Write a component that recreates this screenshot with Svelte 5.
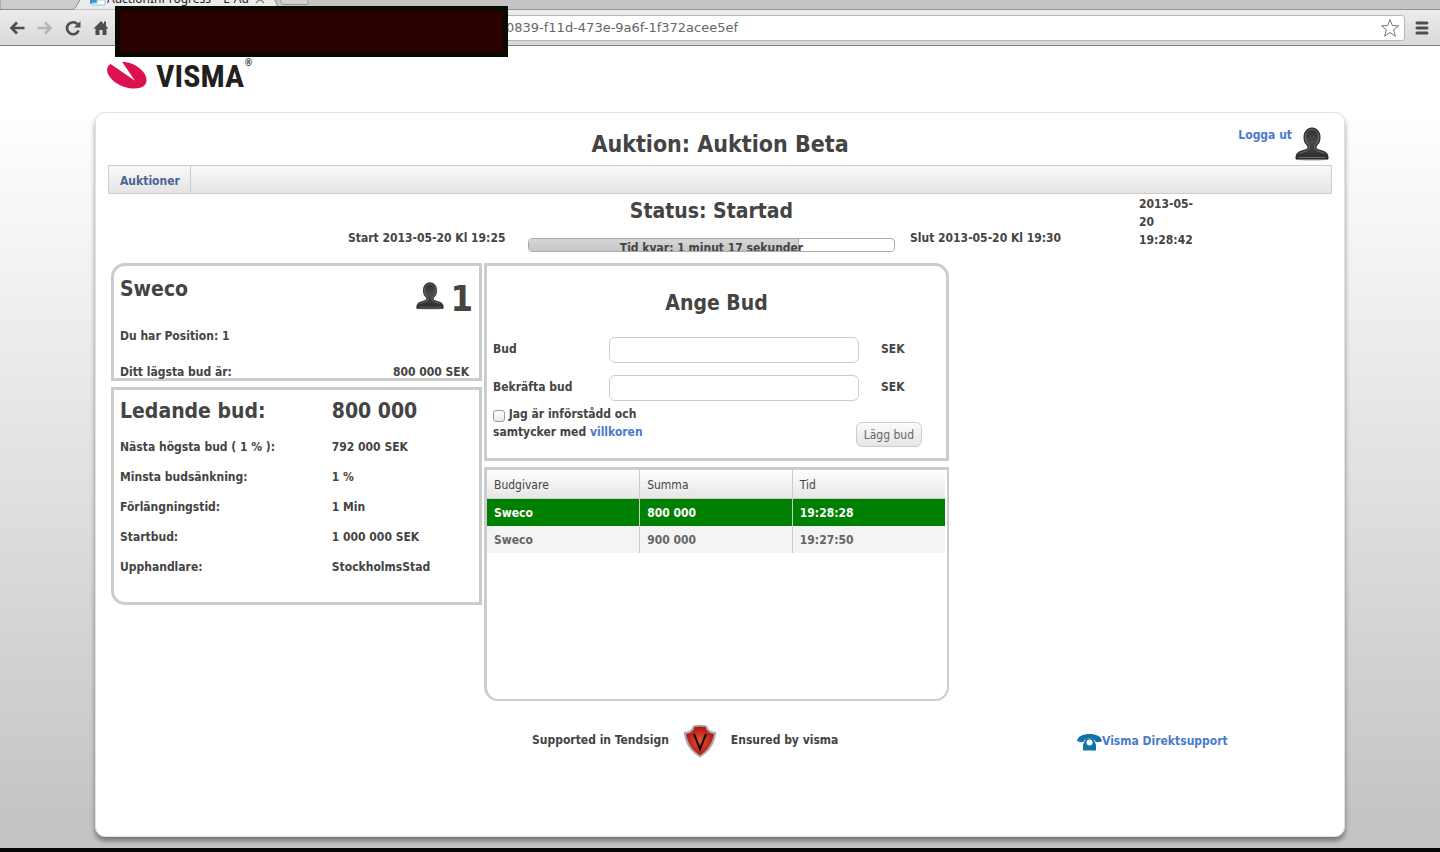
<script>
let address = "0839-f11d-473e-9a6f-1f372acee5ef";

let bid = "";
let confirmBid = "";
let accepted = false;

let details = [
    { label: "Nästa högsta bud ( 1 % ):", value: "792 000 SEK" },
    { label: "Minsta budsänkning:", value: "1 %" },
    { label: "Förlängningstid:", value: "1 Min" },
    { label: "Startbud:", value: "1 000 000 SEK" },
    { label: "Upphandlare:", value: "StockholmsStad" }
];

let bids = [
    { bidder: "Sweco", sum: "800 000", time: "19:28:28", leading: true },
    { bidder: "Sweco", sum: "900 000", time: "19:27:50", leading: false }
];

let progress = 74;
</script>

{#snippet person(size)}
    <svg class="person" width={size} height={size} viewBox="0 0 34 34" aria-hidden="true">
        <defs>
            <linearGradient id="skin" x1="0" y1="0" x2="0" y2="1">
                <stop offset="0" stop-color="#2b2d2d" />
                <stop offset="0.45" stop-color="#4a4c4c" />
                <stop offset="1" stop-color="#2a2a2a" />
            </linearGradient>
        </defs>
        <ellipse cx="17" cy="32" rx="16" ry="2" fill="#d5d5d5" />
        <path d="M17 1c5 0 8 4 8 9 0 4-1 7-4 9v2c1 2 6 2.500 9 4 2 1 3 3 3 6v1H1v-1c0-3 1-5 3-6 3-1.500 8-2 9-4v-2c-3-2-4-5-4-9 0-5 3-9 8-9z" fill="url(#skin)" stroke="#252727" />
        <path d="M14.500 18.500C12 16.500 10.500 14 10.500 10c0-4 2.500-7.500 6.500-7.500s6.500 3.500 6.500 7.500c0 4-1.500 6.500-4 8.500M14.500 19v3c-2 2.500-7 2.500-10 4.500M19.500 19v3c2 2.500 7 2.500 10 4.500M3 30.500h28" fill="none" stroke="#6c6e6e" stroke-width="1" />
    </svg>
{/snippet}

<div class="window">
    <div class="tabs">
        <svg class="tab-shapes" width="320" height="10" viewBox="0 0 320 10" aria-hidden="true">
            <path d="M0 9.500h71c4 0 5-2 9-11h193c4 9 5 11 9 11" fill="#ececec" stroke="none" />
            <path d="M0-1h80c-4 9-5 10.500-9 10.500H0z" fill="#cdcdcd" stroke="#8b8b8b" />
            <path d="M276-1c2 6 5 10 9 10.500h35V-1z" fill="#c5c5c5" />
            <path d="M275-1c3 7 5 10.500 9 10.500M280-1c1 4 2 5.500 5 5.500h21c3 0 3-2 1-5.500" fill="#d2d2d2" stroke="#929292" />
            <path d="M90 0h7v4h-7z" fill="#2e9bd6" />
            <path d="M97 0h8v5H92V3h5z" fill="#fff" stroke="#9fc0da" />
            <path d="M256 3l4-4 4 4" fill="none" stroke="#8b8b8b" stroke-width="1.500" />
        </svg>
        <span class="tab-title">AuctionInProgress – E-Auc</span>
    </div>

    <div class="toolbar">
        <button class="tool" aria-label="Back">
            <svg width="16" height="14" viewBox="0 0 16 14"><path d="M15.500 7H3M8 1.500L2.500 7 8 12.500" fill="none" stroke="#4e4e4e" stroke-width="2.600" /></svg>
        </button>
        <button class="tool" aria-label="Forward">
            <svg width="16" height="14" viewBox="0 0 16 14"><path d="M.5 7H13M8 1.500L13.500 7 8 12.500" fill="none" stroke="#b5b5b5" stroke-width="2.600" /></svg>
        </button>
        <button class="tool" aria-label="Reload">
            <svg width="16" height="16" viewBox="0 0 16 16"><path d="M12.500 4.200A6 6 0 1 0 13.600 10.500" fill="none" stroke="#4e4e4e" stroke-width="2.600" /><path d="M15.500 1v6.500H9z" fill="#4e4e4e" /></svg>
        </button>
        <button class="tool" aria-label="Home">
            <svg width="16" height="16" viewBox="0 0 16 16"><path d="M8 1L0.500 8.500h2V15h4v-5h3v5h4V8.500h2L13 6V1.500h-2V4z" fill="#4e4e4e" /></svg>
        </button>
        <div class="address">
            <input class="address-field" type="text" aria-label="Address" bind:value={address}>
            <svg width="20" height="20" viewBox="0 0 20 20" aria-hidden="true"><path d="M10 1.500l2.300 6 6.200.3-4.900 3.900 1.800 6.500L10 14.500l-5.400 3.700 1.800-6.500L1.500 7.800l6.200-.3z" fill="#fff" stroke="#777" stroke-linejoin="round" /></svg>
        </div>
        <button class="tool" aria-label="Menu">
            <svg width="14" height="14" viewBox="0 0 14 14"><path d="M2 2h10M2 7h10M2 12h10" stroke="#4e4e4e" stroke-width="3" stroke-linecap="round" /></svg>
        </button>
        <div class="redaction"></div>
    </div>

    <div class="page">
        <div class="logo">
            <svg width="40" height="28" viewBox="0 0 40 28" aria-hidden="true">
                <path d="M3.500 3C-2 6.500-.5 13.500 5.500 19 12.500 26 26 29.500 34 26.500c7.500-3 7-11 1-17C30 4.500 23 1 15 .8L28 19.700z" fill="#dd1150" />
            </svg>
            <span class="logo-name">VISMA</span>
            <span class="logo-mark">®</span>
        </div>

        <main class="card">
            <header class="header">
                <h1>Auktion: Auktion Beta</h1>
                <div class="account">
                    <a href="#logout">Logga ut</a>
                    {@render person(34)}
                </div>
            </header>

            <nav class="nav">
                <a href="#auctions">Auktioner</a>
            </nav>

            <section class="status">
                <h2>Status: Startad</h2>
                <span class="start">Start 2013-05-20 Kl 19:25</span>
                <div class="progress">
                    <div class="progress-bar" style="width: {progress}%"></div>
                    <span class="progress-text">Tid kvar: 1 minut 17 sekunder</span>
                </div>
                <span class="end">Slut 2013-05-20 Kl 19:30</span>
                <span class="clock">2013-05-20 19:28:42</span>
            </section>

            <div class="panels">
                <div class="column">
                    <section class="panel company">
                        <div class="company-head">
                            <h2>Sweco</h2>
                            <div class="rank">
                                {@render person(28)}
                                <strong>1</strong>
                            </div>
                        </div>
                        <p>Du har Position: 1</p>
                        <p class="lowest"><span>Ditt lägsta bud är:</span><span>800 000 SEK</span></p>
                    </section>

                    <section class="panel leading">
                        <table class="details">
                            <thead>
                                <tr><th>Ledande bud:</th><th>800 000</th></tr>
                            </thead>
                            <tbody>
                                {#each details as row}
                                    <tr><th>{row.label}</th><td>{row.value}</td></tr>
                                {/each}
                            </tbody>
                        </table>
                    </section>
                </div>

                <div class="column">
                    <form class="panel bid" on:submit|preventDefault>
                        <h2>Ange Bud</h2>
                        <div class="field">
                            <label for="bid">Bud</label>
                            <input id="bid" type="text" bind:value={bid}>
                            <span>SEK</span>
                        </div>
                        <div class="field">
                            <label for="confirm">Bekräfta bud</label>
                            <input id="confirm" type="text" bind:value={confirmBid}>
                            <span>SEK</span>
                        </div>
                        <div class="submit">
                            <label class="terms">
                                <input type="checkbox" bind:checked={accepted}>
                                Jag är införstådd och samtycker med <a href="#terms">villkoren</a>
                            </label>
                            <button class="btn">Lägg bud</button>
                        </div>
                    </form>

                    <section class="panel history">
                        <table class="bids">
                            <thead>
                                <tr><th>Budgivare</th><th>Summa</th><th>Tid</th></tr>
                            </thead>
                            <tbody>
                                {#each bids as row}
                                    <tr class:best={row.leading}>
                                        <td>{row.bidder}</td>
                                        <td>{row.sum}</td>
                                        <td>{row.time}</td>
                                    </tr>
                                {/each}
                            </tbody>
                        </table>
                    </section>
                </div>
            </div>

            <footer class="footer">
                <div class="ensured">
                    <span>Supported in Tendsign</span>
                    <svg width="34" height="34" viewBox="0 0 34 34" aria-hidden="true">
                        <defs>
                            <radialGradient id="shield">
                                <stop offset="0" stop-color="#e0583a" />
                                <stop offset="1" stop-color="#b01712" />
                            </radialGradient>
                        </defs>
                        <path d="M10 1.500q7-1.500 14 0 1 6 9.500 6.500c-2 12-6 19-16.500 25.500C6.500 27 2.500 20 .5 8q8.500-.5 9.500-6.500z" fill="#a9adb3" />
                        <path d="M11.500 3q5.500-1 11 0 1.500 6 8.500 7c-2 9-5 15-14 21.500C8 25 5 19 3 10q7-1 8.500-7z" fill="url(#shield)" />
                        <path d="M11 10l6 15 6-15" fill="none" stroke="#120404" stroke-width="2" />
                    </svg>
                    <span>Ensured by visma</span>
                </div>
                <a class="support" href="#support">
                    <svg width="25" height="17" viewBox="0 0 25 17" aria-hidden="true">
                        <path d="M0 7C1 2 6 0 12.500 0S24 2 25 7c-2 1.500-5 1.500-7 .5 0-2-2-3-5.500-3S7 5.500 7 7.500C5 8.500 2 8.500 0 7z" fill="#1273a6" />
                        <path d="M9 4.500h7l3 6V16.500H6v-6z" fill="#1273a6" />
                        <circle cx="12.500" cy="8.500" r="3" fill="#fff" />
                    </svg>
                    Visma Direktsupport
                </a>
            </footer>
        </main>
    </div>

    <div class="desktop"></div>
</div>

<style>
:global(body) {
    margin: 0;
    background-color: #060606;
}

.window {
    min-height: 100vh;
    display: flex;
    flex-direction: column;
    font-family: "DejaVu Sans Condensed", "Open Sans", sans-serif;
    font-size: 12px;
    font-weight: bold;
    line-height: 18px;
    color: #444444;
}

h1, h2, p {
    margin: 0;
}

h1 {
    font-size: 23px;
    line-height: 30px;
}

h2 {
    font-size: 21px;
    line-height: 26px;
}

a {
    color: #4c7acb;
    text-decoration: none;
}

svg {
    flex: none;
}

/* browser chrome */

.tabs {
    height: 10px;
    position: relative;
    display: flex;
    align-items: flex-end;
    overflow: hidden;
    background-color: #c5c5c5;
    box-shadow: inset 0 -1px #929292;
}

.tab-shapes {
    position: absolute;
    top: 0;
    left: 0;
}

.tab-title {
    position: relative;
    width: 142px;
    padding: 0 0 4px 107px;
    overflow: hidden;
    color: #222222;
    font-family: "Noto Sans", sans-serif;
    font-size: 12px;
    font-weight: normal;
    line-height: 14px;
    white-space: nowrap;
}

.toolbar {
    position: relative;
    height: 35px;
    padding: 0 11px 0 9px;
    display: flex;
    align-items: center;
    gap: 12px;
    background: linear-gradient(#ececec, #d9d9d9);
    border-bottom: 1px solid #808080;
}

.tool {
    padding: 0;
    display: flex;
    background: none;
    border: none;
}

.tool:last-of-type {
    margin-left: -2px;
}

.address {
    height: 24px;
    flex: 1;
    display: flex;
    align-items: center;
    padding-right: 4px;
    background-color: #ffffff;
    border: 1px solid #b5b8b8;
    border-radius: 3px;
}

.address-field {
    min-width: 0;
    flex: 1;
    padding: 0 0 0 384px;
    border: none;
    outline: none;
    color: #666666;
    font-family: "DejaVu Sans", sans-serif;
    font-size: 13px;
}

.redaction {
    position: absolute;
    top: -4px;
    left: 115px;
    width: 383px;
    height: 41px;
    background-color: #2b0000;
    border: 5px solid #0a0900;
}

/* page */

.page {
    flex: 1;
    padding: 12px 24px 11px;
    background: linear-gradient(#ffffff 0%, #ffffff 8%, #c4c4c4 97%);
}

.logo,
.card {
    max-width: 1224px;
    margin: 0 auto;
}

.logo {
    height: 54px;
    display: flex;
    align-items: flex-start;
}

.logo svg {
    margin: 3px 9px 0 -1px;
}

.logo-name {
    color: #231f20;
    font-family: "Roboto Condensed", "Open Sans Condensed", "Noto Sans Condensed", "Liberation Sans", sans-serif;
    font-size: 32px;
    line-height: 36px;
}

.logo-mark {
    font-size: 10px;
    line-height: 10px;
}

.card {
    min-height: 699px;
    padding: 12px;
    background-color: #ffffff;
    border: 1px solid #e2e2e2;
    border-radius: 10px;
    box-shadow: 0 4px 5px rgba(0, 0, 0, 0.4);
}

.header {
    height: 40px;
    display: grid;
    grid-template-columns: 1fr auto 1fr;
}

.header h1 {
    grid-column: 2;
    padding-top: 4px;
}

.account {
    display: flex;
    justify-content: flex-end;
    gap: 3px;
    padding: 1px 3px 0 0;
}

.account svg {
    margin-top: 1px;
}

.nav {
    height: 27px;
    display: flex;
    background: linear-gradient(#f9f9f9, #e4e4e4);
    border: 1px solid #cccccc;
}

.nav a {
    padding: 0 10px 0 11px;
    border-right: 1px solid #cccccc;
    color: #4a6496;
    line-height: 30px;
}

.status {
    height: 69px;
    display: grid;
    grid-template-columns: 240fr 180fr 367fr 244fr 193fr;
    grid-template-rows: 34px 35px;
}

.status h2 {
    grid-column: 3;
    padding-top: 4px;
    text-align: center;
    white-space: nowrap;
}

.start {
    grid-column: 2;
    grid-row: 2;
}

.progress {
    position: relative;
    grid-column: 3;
    grid-row: 2;
    height: 12px;
    margin-top: 10px;
    overflow: hidden;
    border: 1px solid #aaaaaa;
    border-radius: 4px;
    text-align: center;
}

.progress-bar {
    position: absolute;
    top: 0;
    left: 0;
    height: 100%;
    background: linear-gradient(#d6d6d6, #c6c6c6);
    border-right: 1px solid #aaaaaa;
    box-sizing: border-box;
}

.progress-text {
    position: relative;
    white-space: nowrap;
}

.end {
    grid-column: 4;
    grid-row: 2;
    padding-left: 15px;
}

.start,
.end {
    padding-top: 1px;
    white-space: nowrap;
}

.clock {
    grid-column: 5;
    grid-row: 1 / 3;
    width: 60px;
    padding-top: 1px;
}

.panels {
    display: grid;
    grid-template-columns: 371fr 465fr 381fr;
    gap: 2px;
    padding-left: 3px;
}

.column {
    display: flex;
    flex-direction: column;
    gap: 6px;
}

.panel {
    border: 3px solid #cccccc;
}

.company {
    padding: 0 6px;
    border-top-left-radius: 14px;
}

.company-head {
    height: 64px;
    display: flex;
    justify-content: space-between;
    box-sizing: border-box;
    padding-top: 10px;
}

.rank {
    display: flex;
    gap: 6px;
    padding-top: 6px;
}

.rank strong {
    font-size: 36px;
    line-height: 34px;
}

.company p {
    margin-bottom: 24px;
    line-height: 12px;
}

.company .lowest {
    margin-bottom: 0;
    padding-right: 4px;
    display: flex;
    justify-content: space-between;
}

.leading {
    padding: 0 6px 20px;
    border-bottom-left-radius: 14px;
}

.details,
.bids {
    width: 100%;
    border-collapse: collapse;
    table-layout: fixed;
    text-align: left;
}

.details th,
.details td {
    height: 30px;
    padding: 0;
}

.details th:first-child {
    width: 60%;
}

.details thead th {
    height: 42px;
    font-size: 21px;
}

.bid {
    padding: 24px 0 11px 6px;
    border-top-right-radius: 14px;
}

.bid h2 {
    padding-right: 6px;
    margin-bottom: 15px;
    text-align: center;
}

.field {
    height: 38px;
    display: grid;
    grid-template-columns: 116px 250px auto;
    align-items: center;
}

.field input {
    height: 26px;
    box-sizing: border-box;
    border: 1px solid #cccccc;
    border-radius: 6px;
}

.field label,
.field span {
    padding-bottom: 2px;
}

.field span {
    padding-left: 22px;
}

.submit {
    display: flex;
    justify-content: space-between;
    align-items: flex-end;
    margin-top: -2px;
    padding-right: 24px;
}

.terms {
    width: 170px;
    margin-bottom: 6px;
}

.terms input {
    appearance: none;
    width: 12px;
    height: 12px;
    box-sizing: border-box;
    margin: 0;
    vertical-align: -4px;
    background: linear-gradient(#ffffff, #e9e9e9);
    border: 1px solid #999999;
    border-radius: 3px;
}

.terms input:checked {
    background: #4c7acb;
}

.btn {
    height: 25px;
    padding: 0 7px;
    background: linear-gradient(#fbfbfb, #e6e6e6);
    border: 1px solid #cccccc;
    border-radius: 6px;
    color: #666666;
    font-family: inherit;
    font-size: 12px;
}

.history {
    min-height: 229px;
    border-width: 3px 2px 2px 3px;
    border-radius: 0 0 14px 14px;
    padding-right: 2px;
}

.bids th,
.bids td {
    height: 27px;
    padding: 0 0 0 7px;
}

.bids th + th,
.bids td + td {
    border-left: 1px solid #cccccc;
}

.bids th {
    height: 26px;
    padding-top: 2px;
    background: linear-gradient(#fefefe, #e6e6e6);
    border-bottom: 1px solid #cccccc;
    font-weight: normal;
}

.bids td {
    background-color: #f4f4f4;
    color: #666666;
}

.bids .best td {
    background-color: #008000;
    color: #ffffff;
}

.footer {
    display: grid;
    grid-template-columns: 424fr 545fr 255fr;
    padding-top: 23px;
}

.ensured {
    grid-column: 2;
    display: flex;
    gap: 14px;
}

.ensured span {
    padding-top: 7px;
}

.support {
    display: flex;
    padding-top: 8px;
}

.support svg {
    margin-top: 2px;
}

.desktop {
    height: 4px;
    background-color: #060606;
}
</style>
